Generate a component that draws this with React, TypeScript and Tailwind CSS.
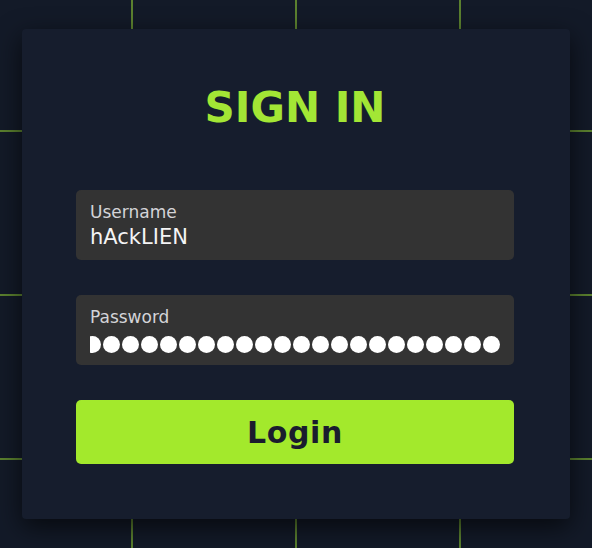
export default function App() {
  const dots = Array.from({ length: 22 });

  return (
    <main className="flex h-screen w-full items-center justify-center bg-[#131a28] bg-[linear-gradient(to_right,rgba(163,230,53,0.5)_2px,transparent_2px),linear-gradient(to_bottom,rgba(163,230,53,0.5)_2px,transparent_2px)] bg-[size:164px_164px] bg-[position:131px_130px] font-['DejaVu_Sans',sans-serif]">
      <section className="w-[548px] rounded-[4px] bg-[#161d2d] pt-[54px] pr-[56px] pb-[55px] pl-[54px] shadow-[0_8px_26px_rgba(0,0,0,0.65)]">
        <h1 className="mb-[57px] text-center text-[42px] font-bold leading-[50px] text-[#a3e635]">
          SIGN IN
        </h1>

        <div className="rounded-[5px] bg-[#333333] px-[14px] pt-[12px] pb-[10px]">
          <p className="text-[17px] leading-[20px] text-[#d4d4d8]">Username</p>
          <p className="mt-[2px] text-[21px] leading-[26px] text-[#f4f4f5]">hAckLIEN</p>
        </div>

        <div className="mt-[35px] rounded-[5px] bg-[#333333] px-[14px] pt-[12px] pb-[10px]">
          <p className="text-[17px] leading-[20px] text-[#d4d4d8]">Password</p>
          <div className="mt-[2px] flex h-[26px] items-end justify-end gap-[2px] overflow-hidden pb-[2px]">
            {dots.map((_, i) => (
              <span key={i} className="h-[17px] w-[17px] shrink-0 rounded-full bg-white" />
            ))}
          </div>
        </div>

        <button
          type="button"
          className="mt-[35px] flex h-[64px] w-full items-center justify-center rounded-[5px] bg-[#a3e92c] text-[30px] font-bold tracking-[0.02em] text-[#1a1c2e]"
        >
          Login
        </button>
      </section>
    </main>
  );
}
